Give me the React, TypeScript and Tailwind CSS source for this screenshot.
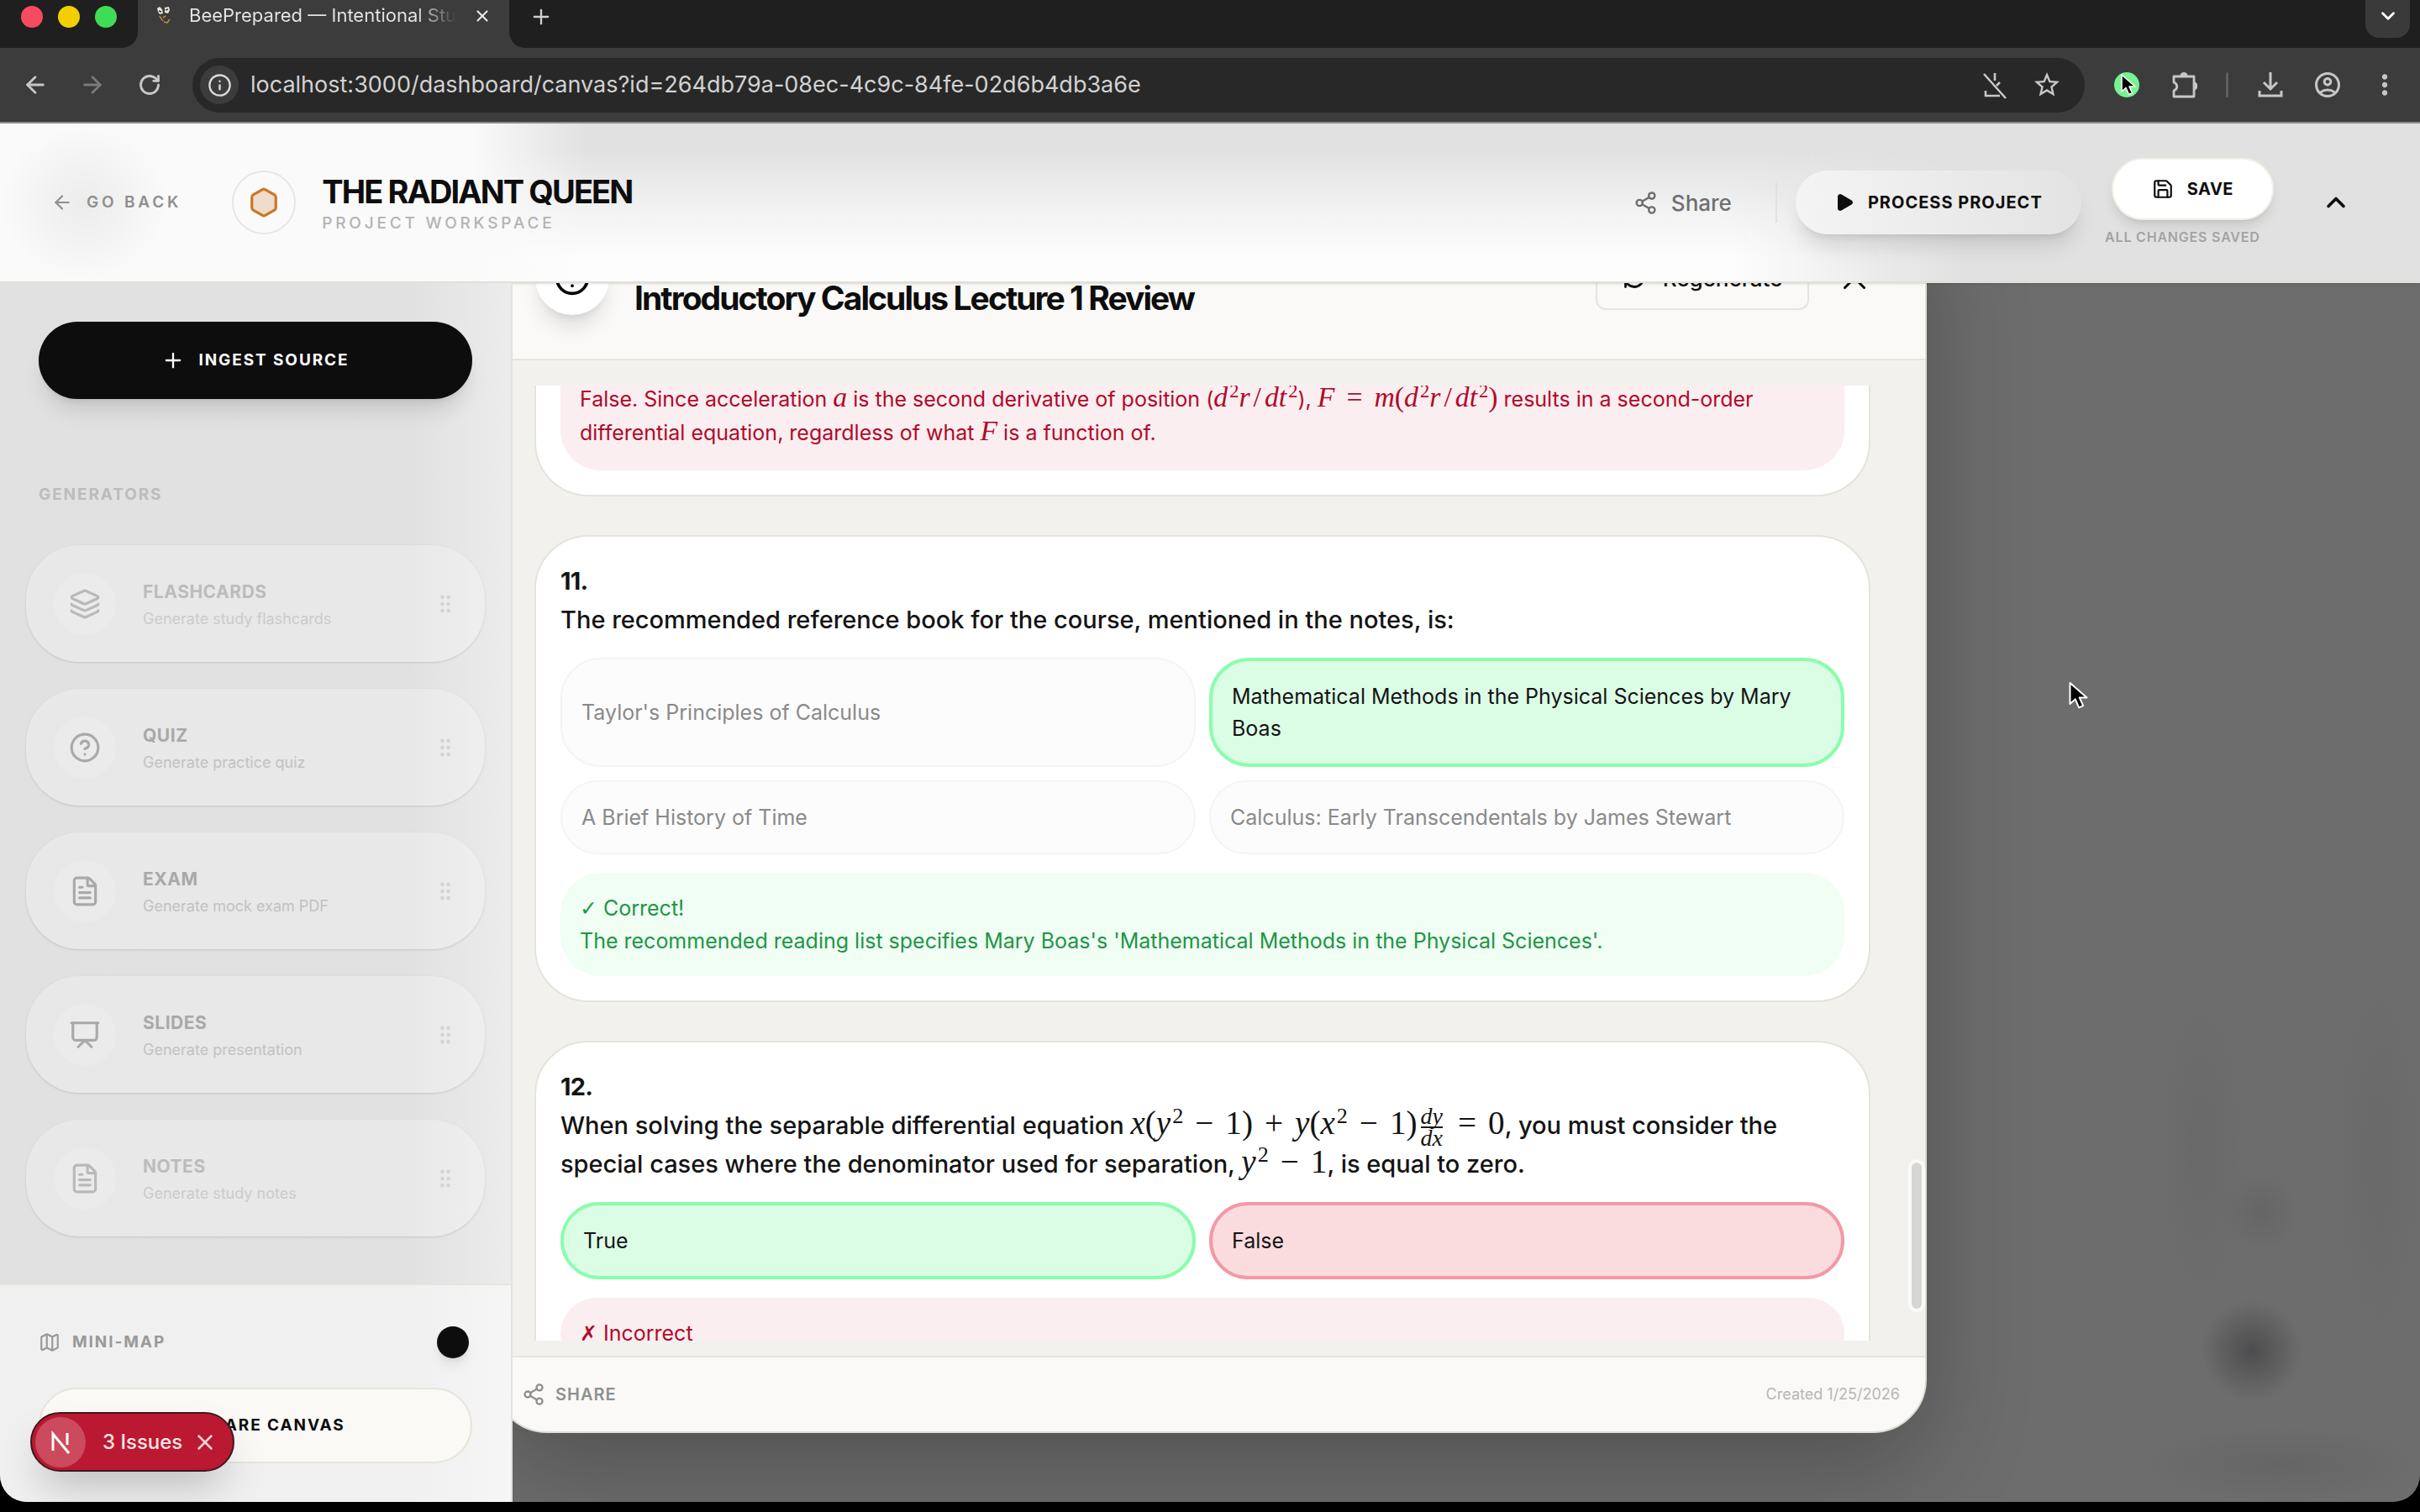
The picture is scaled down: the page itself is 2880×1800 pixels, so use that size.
import type { ReactNode } from "react";
import {
  ArrowLeft,
  ArrowRight,
  ChevronDown,
  ChevronUp,
  CircleHelp,
  FileText,
  GripVertical,
  Hexagon,
  Info,
  Layers,
  Map,
  Play,
  Plus,
  Presentation,
  RefreshCw,
  RotateCw,
  Save,
  Share2,
  X,
} from "lucide-react";
import { MdMoreVert, MdOutlineAccountCircle, MdStarOutline } from "react-icons/md";

const generators = [
  { title: "FLASHCARDS", text: "Generate study flashcards", icon: Layers, faded: true },
  { title: "QUIZ", text: "Generate practice quiz", icon: CircleHelp, faded: false },
  { title: "EXAM", text: "Generate mock exam PDF", icon: FileText, faded: false },
  { title: "SLIDES", text: "Generate presentation", icon: Presentation, faded: false },
  { title: "NOTES", text: "Generate study notes", icon: FileText, faded: true },
];

function Pointer({ className }: { className: string }) {
  return (
    <svg viewBox="0 0 20 28" className={className} aria-hidden="true">
      <path
        d="M2 2v20l5-4.500 3.500 8 4-1.800-3.500-7.700H18z"
        fill="#000"
        stroke="#fff"
        strokeWidth="1.600"
        strokeLinejoin="round"
      />
    </svg>
  );
}

function BrowserTabs() {
  return (
    <div className="flex h-[57px] items-start bg-[#1f1f1f]">
      <div className="flex gap-[18px] pl-[25px] pt-[7px]">
        <span className="size-[26px] rounded-full bg-[#f74b60]" />
        <span className="size-[26px] rounded-full bg-[#f4cf00]" />
        <span className="size-[26px] rounded-full bg-[#3fdd55]" />
      </div>
      <svg viewBox="0 0 20 20" className="ml-[5px] size-5 self-end" aria-hidden="true">
        <path d="M20 0v20H0C12 20 20 12 20 0z" fill="#3c3c3c" />
      </svg>
      <div className="flex h-full w-[442px] items-start bg-[#3c3c3c] pl-[22px]">
        <svg viewBox="0 0 18 28" className="mt-1 h-7 w-[18px]" aria-hidden="true">
          <path d="M1 6l3-2 3 3 1 5-4 1-2-3zM10 5l5-1 1 4-2 4-4-1z" fill="#e8e4dc" />
          <path d="M3 9l3 1M11 8l3-1" stroke="#3a3226" strokeWidth="1.400" fill="none" />
          <path d="M4 15c1 2 2 4 4 6M8 17l3-2M9 22l4 1 3-4" stroke="#b98a3c" strokeWidth="1.600" fill="none" />
        </svg>
        <span className="ml-[21px] w-[318px] overflow-hidden whitespace-nowrap bg-linear-to-r from-[#e6e6e6] from-85% to-transparent bg-clip-text text-[22px] leading-9 text-transparent">
          BeePrepared — Intentional Study
        </span>
        <button aria-label="Close tab" className="ml-5 mt-2 text-[#e6e6e6]">
          <X size={22} strokeWidth={2.4} />
        </button>
      </div>
      <svg viewBox="0 0 20 20" className="size-5 self-end" aria-hidden="true">
        <path d="M0 0v20h20C8 20 0 12 0 0z" fill="#3c3c3c" />
      </svg>
      <button aria-label="New tab" className="ml-1 mt-1.5 text-[#cfcfcf]">
        <Plus size={28} strokeWidth={2} />
      </button>
      <button aria-label="Search tabs" className="ml-auto mr-3 flex h-[45px] w-[53px] items-center justify-center rounded-b-2xl bg-[#3a3a3a] pb-2 text-white">
        <ChevronDown size={26} strokeWidth={2.6} />
      </button>
    </div>
  );
}

function BrowserToolbar() {
  const cell = "flex w-[68px] items-center justify-center text-[#c7c7c7]";
  return (
    <div className="flex h-[90px] items-center border-b-2 border-[#8a8a8a] bg-[#3c3c3c] px-2">
      <button aria-label="Back" className={cell}>
        <ArrowLeft size={32} strokeWidth={2.1} />
      </button>
      <button aria-label="Forward" className="flex w-[68px] items-center justify-center text-[#7a7a7a]">
        <ArrowRight size={32} strokeWidth={2.1} />
      </button>
      <button aria-label="Reload" className={cell}>
        <RotateCw size={28} strokeWidth={2.4} />
      </button>
      <div className="ml-[17px] flex h-[65px] flex-1 items-center rounded-full bg-[#282828] pl-[9px] pr-[14px]">
        <span className="flex size-[46px] items-center justify-center rounded-full bg-[#3c3c3c] text-[#dadada]">
          <Info size={29} strokeWidth={2} />
        </span>
        <input
          aria-label="Address"
          readOnly
          value="localhost:3000/dashboard/canvas?id=264db79a-08ec-4c9c-84fe-02d6b4db3a6e"
          className="ml-[14px] min-w-0 flex-1 bg-transparent text-[27px] text-[#d2d2d2] outline-none"
        />
        <button aria-label="Downloads blocked" className="flex w-[62px] justify-center text-[#c7c7c7]">
          <svg viewBox="0 0 32 36" className="h-9 w-8" fill="none" stroke="currentColor" strokeWidth="2.600">
            <path d="M3 5l26 29M5 25v6h17M16 4v9M22 15l-4 4" />
          </svg>
        </button>
        <button aria-label="Bookmark" className="flex w-[62px] justify-center text-[#c7c7c7]">
          <MdStarOutline size={36} />
        </button>
      </div>
      <button aria-label="Cursor extension" className="ml-4 flex w-[68px] justify-center">
        <span className="flex size-[30px] items-center justify-center rounded-full bg-[#76f393]">
          <Pointer className="ml-1 h-7 w-5" />
        </span>
      </button>
      <button aria-label="Extensions" className={cell}>
        <svg viewBox="0 0 32 36" className="h-9 w-8" fill="none" stroke="currentColor" strokeWidth="2.800" strokeLinejoin="round">
          <path d="M4 8h24v24H4v-7c5-2 5-8 0-10z" />
          <path d="M13 6a3.500 3.500 0 0 1 6 0zM29 16a4 4 0 0 1 0 7z" fill="currentColor" />
        </svg>
      </button>
      <span className="mx-4 h-[30px] w-[3px] rounded bg-[#606060]" />
      <button aria-label="Downloads" className={cell}>
        <svg viewBox="0 0 32 36" className="h-9 w-8" fill="none" stroke="currentColor" strokeWidth="3">
          <path d="M16 3v19M8 15l8 8 8-8M3 25v6h26v-6" />
        </svg>
      </button>
      <button aria-label="Profile" className={cell}>
        <MdOutlineAccountCircle size={36} />
      </button>
      <button aria-label="Browser menu" className={cell}>
        <MdMoreVert size={38} />
      </button>
    </div>
  );
}

function ProjectHeader() {
  return (
    <header className="relative z-20 flex h-[190px] shrink-0 items-center border-b-2 border-[#e0e0d8] bg-[#e1e1e1] shadow-sm">
      {/* frosted glass: the dialog shows through as a lighter area */}
      <div className="absolute inset-y-0 left-0 -z-10 w-[2340px] bg-linear-to-b from-transparent from-15% via-[#f4f4f4] via-60% to-[#fdfdfd] to-85% [mask-image:linear-gradient(to_right,black_88%,transparent)]" />
      <div className="absolute inset-y-0 left-0 -z-10 w-[700px] bg-linear-to-r from-[#fafafa] from-80% to-transparent" />
      <div className="absolute inset-y-0 left-0 -z-10 w-[200px] bg-[radial-gradient(closest-side,#ececec,transparent)]" />
      <a href="#back" className="flex items-center gap-4 pl-[61px] text-[19px] font-semibold tracking-[0.2em] text-[#8f8f8f]">
        <ArrowLeft size={26} strokeWidth={2} />
        GO BACK
      </a>
      <div className="ml-[60px] flex size-[76px] items-center justify-center rounded-full border-2 border-[#e6e6e6] bg-[#fafafa]">
        <Hexagon size={38} strokeWidth={2} className="fill-[#f0dccb] text-[#cc7722]" />
      </div>
      <div className="ml-[31px] pt-1.5">
        <h1 className="text-[38px] font-bold leading-10 tracking-tighter text-[#0d0d0d]">THE RADIANT QUEEN</h1>
        <p className="mt-1 text-[19px] font-medium leading-7 tracking-[0.2em] text-[#b3b3b3]">PROJECT WORKSPACE</p>
      </div>
      <div className="ml-auto flex items-center pr-[82px]">
        <button className="flex items-center gap-4 text-[26px] font-medium text-[#6f6f6f]">
          <Share2 size={29} strokeWidth={2} />
          Share
        </button>
        <span className="ml-[52px] h-12 w-0.5 bg-[#e2e2da]" />
        <button className="ml-[22px] flex h-[76px] items-center gap-4 rounded-full bg-linear-to-r from-[#f4f4f4] to-[#e3e3e3] px-[46px] text-[20px] font-bold tracking-wider text-[#0d0d0d] shadow-xl">
          <Play size={24} className="fill-current" />
          PROCESS PROJECT
        </button>
        <div className="ml-9 flex flex-col items-center">
          <button className="flex h-[74px] items-center gap-4 rounded-full border-2 border-[#f0f0e6] bg-white px-[46px] text-[20px] font-bold tracking-wide text-[#0d0d0d] shadow-lg">
            <Save size={26} strokeWidth={2} />
            SAVE
          </button>
          <p className="-ml-6 mt-2 text-[16px] font-semibold leading-6 tracking-wider text-[#a3a3a3]">ALL CHANGES SAVED</p>
        </div>
        <button aria-label="Collapse header" className="ml-14 text-[#0d0d0d]">
          <ChevronUp size={36} strokeWidth={2.4} />
        </button>
      </div>
    </header>
  );
}

function Sidebar() {
  return (
    <aside className="relative z-20 flex w-[610px] shrink-0 flex-col border-r-2 border-[#e4e4dc] bg-linear-to-r from-[#e1e1e1] from-80% to-[#ececec]">
      <div className="flex flex-1 flex-col px-[31px] pt-[46px]">
        <button className="mx-[15px] flex h-[92px] items-center justify-center gap-4 rounded-full bg-[#0d0d0d] text-[19px] font-bold tracking-widest text-white shadow-xl">
          <Plus size={28} strokeWidth={2} />
          INGEST SOURCE
        </button>
        <h2 className="ml-[15px] mt-[98px] text-[19px] font-bold leading-8 tracking-widest text-[#bcbcbc]">GENERATORS</h2>
        <ul className="mt-11 flex flex-col gap-8">
          {generators.map(({ title, text, icon: Icon, faded }) => (
            <li key={title} className="flex h-[139px] items-center rounded-[64px] bg-white/25 px-[33px] shadow-sm">
              <span className={`flex size-[74px] items-center justify-center rounded-full bg-white/15 ${faded ? "text-[#b9b9b9]" : "text-[#a9a9a9]"}`}>
                <Icon size={38} strokeWidth={2} />
              </span>
              <div className="ml-8 pt-1">
                <h3 className={`text-[21px] font-bold leading-8 tracking-wide ${faded ? "text-[#bcbcbc]" : "text-[#a9a9a9]"}`}>{title}</h3>
                <p className={`text-[18px] leading-8 ${faded ? "text-[#cbcbcb]" : "text-[#c2c2c2]"}`}>{text}</p>
              </div>
              <GripVertical size={28} strokeWidth={2} className="ml-auto text-[#d4d4d4]" />
            </li>
          ))}
        </ul>
      </div>
      <div className="border-t-2 border-[#e4e4dc] bg-white/50 px-[46px] pb-[46px] pt-12">
        <div className="flex h-10 items-center justify-between">
          <h2 className="flex items-center gap-[14px] text-[19px] font-bold tracking-widest text-[#999]">
            <Map size={26} strokeWidth={2} />
            MINI-MAP
          </h2>
          <button aria-label="Toggle mini-map" className="mr-1 size-[38px] rounded-full bg-[#0d0d0d] shadow-lg" />
        </div>
        <button className="mt-[34px] flex h-[90px] w-full items-center justify-center gap-4 rounded-full border-2 border-[#e8e6d8] bg-[#faf9f6] text-[19px] font-bold tracking-widest text-[#0d0d0d]">
          <Share2 size={24} />
          SHARE CANVAS
        </button>
      </div>
      <div className="absolute bottom-9 left-9 flex h-[71px] items-center rounded-full border-2 border-[#3a1a20] bg-[#bb1831] pl-1 pr-[18px] text-white shadow-2xl">
        <span className="flex size-[60px] items-center justify-center rounded-full bg-[#cc4a5d]">
          <svg viewBox="0 0 24 28" className="h-7 w-6" fill="none" stroke="#fff" strokeWidth="3">
            <path d="M3 24V4l19 23" />
            <path d="M20 3v14" />
          </svg>
        </span>
        <span className="ml-5 text-[24px] font-medium text-[#fbe3e6]">3 Issues</span>
        <button aria-label="Dismiss issues" className="ml-3 text-[#fbd5da]">
          <X size={30} strokeWidth={2} />
        </button>
      </div>
    </aside>
  );
}

function Var({ children }: { children: ReactNode }) {
  return <i className="font-['Liberation_Serif',serif] text-[1.35em] font-normal leading-none">{children}</i>;
}

function Num({ children }: { children: ReactNode }) {
  return <span className="font-['Liberation_Serif',serif] text-[1.35em] font-normal leading-none">{children}</span>;
}

function Op({ children }: { children: ReactNode }) {
  return <span className="mx-3.5 font-['Liberation_Serif',serif] text-[1.35em] font-normal leading-none">{children}</span>;
}

function Sup() {
  return <sup className="ml-0.5 font-['Liberation_Serif',serif] text-[0.9em] font-normal leading-none">2</sup>;
}

function SecondDerivative() {
  return (
    <>
      <Var>d</Var><Sup /><Var>r</Var><span className="mx-1"><Num>/</Num></span><Var>dt</Var><Sup />
    </>
  );
}

function Fraction() {
  return (
    <span className="-my-2 mx-1 inline-flex flex-col items-center align-middle font-['Liberation_Serif',serif] text-[28px] font-normal italic leading-6">
      <span className="border-b-2 border-[#1a1a1a]">dy</span>
      <span>dx</span>
    </span>
  );
}

function Option({ state, children }: { state: "plain" | "right" | "wrong"; children: ReactNode }) {
  const looks = {
    plain: "border-2 border-[#f4f4f4] bg-[#fcfcfc] text-[#8a8a8a]",
    right: "border-4 border-[#8afdac] bg-[#dcfde5] text-[#141414]",
    wrong: "border-4 border-[#f398a6] bg-[#fadcdf] text-[#141414]",
  };
  return (
    <button className={`rounded-[48px] px-[23px] py-[23px] text-left text-[25px] leading-[38px] ${looks[state]}`}>
      {children}
    </button>
  );
}

function Question({ number, text, children }: { number: number; text: ReactNode; children: ReactNode }) {
  return (
    <section className="rounded-[64px] border-2 border-[#e4e4dc] bg-white px-[29px] pb-[29px] pt-[30px]">
      <h3 className="text-[29px] font-bold leading-[46px] tracking-tight text-[#141414]">{number}.</h3>
      <div className="text-[29px] font-medium leading-[46px] text-[#141414]">{text}</div>
      {children}
    </section>
  );
}

function QuizDialog() {
  return (
    <div className="absolute inset-0 z-10 flex items-center justify-center">
      <div
        role="dialog"
        aria-label="Introductory Calculus Lecture 1 Review"
        className="flex h-[90%] w-full max-w-[1706px] flex-col overflow-hidden rounded-[64px] border-2 border-[#deded6] bg-[#faf9f7] shadow-[0_40px_120px_rgba(0,0,0,0.25)]"
      >
        <div className="flex items-center border-b-2 border-[#e6e4dc] px-12 pb-[52px] pt-14">
          <span className="flex size-[88px] items-center justify-center rounded-full bg-white shadow-xl">
            <CircleHelp size={44} strokeWidth={2} />
          </span>
          <h2 className="ml-[30px] self-end text-[39px] font-bold leading-10 tracking-tighter text-[#0d0d0d]">
            Introductory Calculus Lecture 1 Review
          </h2>
          <button className="ml-auto flex h-[76px] w-[254px] items-center justify-center gap-5 rounded-xl border-2 border-[#e4e4e4] text-[26px] font-medium text-[#0d0d0d]">
            <RefreshCw size={28} strokeWidth={2.4} />
            Regenerate
          </button>
          <button aria-label="Close" className="ml-[18px] flex w-[72px] justify-center text-[#0d0d0d]">
            <X size={46} strokeWidth={1.6} />
          </button>
        </div>

        <div className="relative flex min-h-0 flex-1 flex-col bg-[#f2f1ed] pb-[18px] pl-[47px] pr-[65px] pt-[30px]">
          <div className="flex min-h-0 flex-1 flex-col gap-[46px] overflow-hidden">
            <section className="shrink-0 rounded-b-[64px] border-2 border-t-0 border-[#e4e4dc] bg-white px-[29px] pb-[29px]">
              <div className="-mt-1 rounded-b-[48px] bg-[#fbeef0] px-[23px] pb-[25px] text-[25px] leading-10 text-[#b00a2c]">
                False. Since acceleration <Var>a</Var> is the second derivative of position (<SecondDerivative />),{" "}
                <Var>F</Var><Op>=</Op><Var>m</Var><Num>(</Num><SecondDerivative /><Num>)</Num> results in a second-order
                differential equation, regardless of what <Var>F</Var> is a function of.
              </div>
            </section>

            <Question number={11} text="The recommended reference book for the course, mentioned in the notes, is:">
              <div className="mt-[22px] grid grid-cols-2 gap-4">
                <Option state="plain">Taylor's Principles of Calculus</Option>
                <Option state="right">Mathematical Methods in the Physical Sciences by Mary Boas</Option>
                <Option state="plain">A Brief History of Time</Option>
                <Option state="plain">Calculus: Early Transcendentals by James Stewart</Option>
              </div>
              <div className="mt-[22px] rounded-[48px] bg-[#f0fef3] px-[23px] py-[23px] text-[25px] leading-[38px] text-[#219547]">
                <p><span className="font-['DejaVu_Sans',sans-serif] font-bold">✓</span> Correct!</p>
                <p>The recommended reading list specifies Mary Boas's 'Mathematical Methods in the Physical Sciences'.</p>
              </div>
            </Question>

            <Question
              number={12}
              text={
                <>
                  When solving the separable differential equation{" "}
                  <span className="whitespace-nowrap">
                    <Var>x</Var><Num>(</Num><Var>y</Var><Sup /><Op>−</Op><Num>1)</Num><Op>+</Op>
                    <Var>y</Var><Num>(</Num><Var>x</Var><Sup /><Op>−</Op><Num>1)</Num>
                    <Fraction /><Op>=</Op><Num>0</Num>,
                  </span>{" "}
                  you must consider the special cases where the denominator used for separation,{" "}
                  <span className="whitespace-nowrap"><Var>y</Var><Sup /><Op>−</Op><Num>1</Num></span>, is equal to zero.
                </>
              }
            >
              <div className="mt-[22px] grid grid-cols-2 gap-4">
                <Option state="right">True</Option>
                <Option state="wrong">False</Option>
              </div>
              <div className="mt-[22px] rounded-[48px] bg-[#fbeef0] px-[23px] py-[23px] text-[25px] leading-[38px] text-[#b00a2c]">
                <p><span className="font-['DejaVu_Sans',sans-serif] font-bold">✗</span> Incorrect</p>
              </div>
            </Question>
          </div>
          <span className="absolute bottom-[56px] right-1 h-[174px] w-3 rounded-full bg-[#d6d6d4] ring-4 ring-[#fafaf8]" />
        </div>

        <div className="flex h-[90px] shrink-0 items-center justify-between border-t-2 border-[#e6e4dc] pl-8 pr-[30px] text-[20px]">
          <button className="flex items-center gap-3 font-semibold tracking-wider text-[#8f8f8f]">
            <Share2 size={28} strokeWidth={2} />
            SHARE
          </button>
          <span className="text-[18px] text-[#b6b6b4]">Created 1/25/2026</span>
        </div>
      </div>
    </div>
  );
}

export default function App() {
  return (
    <div className="flex h-screen flex-col overflow-hidden bg-black pb-3 font-['Inter',sans-serif]">
      <BrowserTabs />
      <BrowserToolbar />
      <div className="relative flex min-h-0 flex-1 flex-col overflow-hidden rounded-b-[32px] bg-[#6d6d6d]">
        <ProjectHeader />
        <div className="flex min-h-0 flex-1">
          <Sidebar />
          <main className="relative flex-1">
            {/* soft shapes of the dimmed canvas controls */}
            <div className="absolute bottom-[120px] right-[140px] size-[120px] rounded-full bg-[radial-gradient(closest-side,#4d4d4f,transparent)]" />
            <div className="absolute bottom-[300px] right-[145px] size-[90px] rounded-full bg-[radial-gradient(closest-side,#656565,transparent)]" />
            <div className="absolute bottom-[240px] right-[210px] h-[360px] w-[100px] bg-[radial-gradient(closest-side,#696969,transparent)]" />
            <div className="absolute bottom-[200px] right-0 h-[420px] w-[100px] bg-[radial-gradient(closest-side,#696969,transparent)]" />
            <div className="absolute bottom-0 right-0 h-[90px] w-[330px] bg-[radial-gradient(closest-side,#656565,transparent)]" />
          </main>
        </div>
        <QuizDialog />
        <Pointer className="absolute left-[2461px] top-[662px] z-30 h-[38px] w-[25px]" />
      </div>
    </div>
  );
}
